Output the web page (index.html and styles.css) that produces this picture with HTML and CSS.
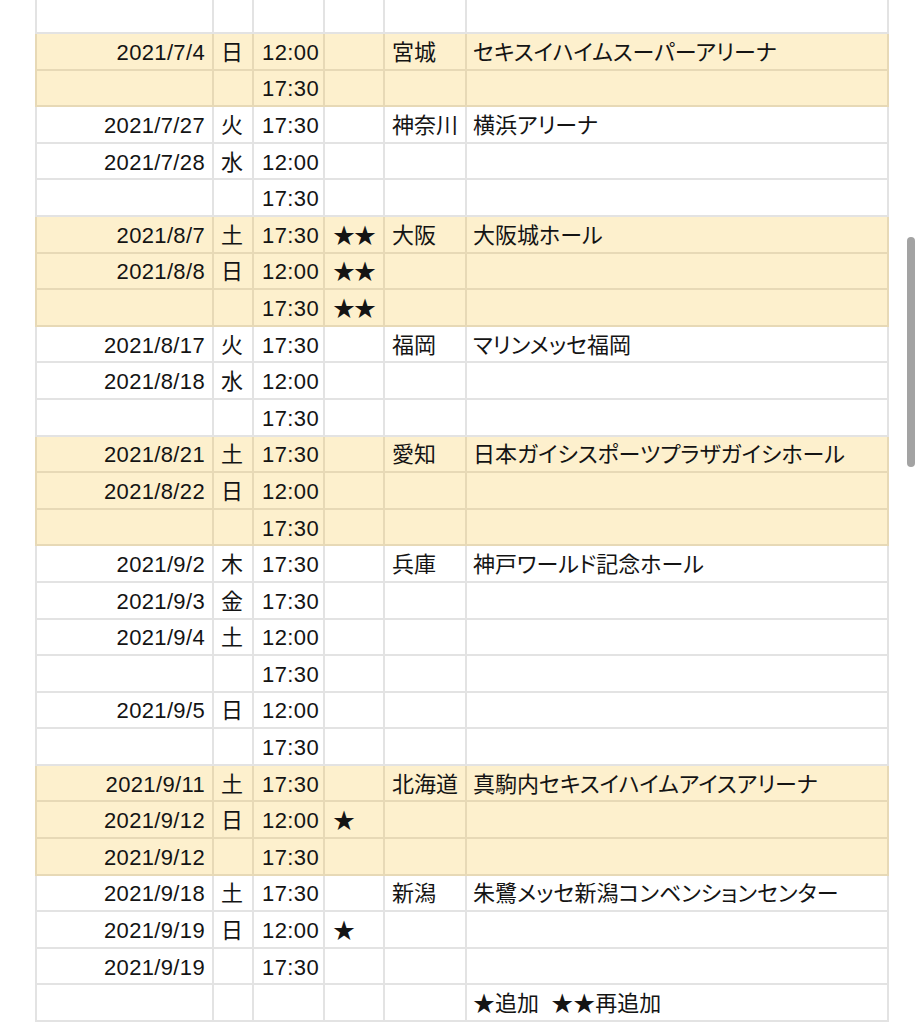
FILE: index.html
```html
<!DOCTYPE html>
<html lang="ja">
<head>
<meta charset="utf-8">
<title>日程</title>
<link rel="stylesheet" href="styles.css">
</head>
<body>
<div class="page">
<table class="sheet">
<colgroup>
<col class="c-date"><col class="c-day"><col class="c-time"><col class="c-star"><col class="c-pref"><col class="c-venue">
</colgroup>
<tbody>
<tr class="top"><td></td><td></td><td></td><td></td><td></td><td></td></tr>
<tr class="hl"><td class="date">2021/7/4</td><td>日</td><td class="time">12:00</td><td></td><td>宮城</td><td class="venue">セキスイハイムスーパーアリーナ</td></tr>
<tr class="hl"><td class="date"></td><td></td><td class="time">17:30</td><td></td><td></td><td></td></tr>
<tr><td class="date">2021/7/27</td><td>火</td><td class="time">17:30</td><td></td><td>神奈川</td><td class="venue">横浜アリーナ</td></tr>
<tr><td class="date">2021/7/28</td><td>水</td><td class="time">12:00</td><td></td><td></td><td></td></tr>
<tr><td class="date"></td><td></td><td class="time">17:30</td><td></td><td></td><td></td></tr>
<tr class="hl"><td class="date">2021/8/7</td><td>土</td><td class="time">17:30</td><td class="star">★★</td><td>大阪</td><td class="venue">大阪城ホール</td></tr>
<tr class="hl"><td class="date">2021/8/8</td><td>日</td><td class="time">12:00</td><td class="star">★★</td><td></td><td></td></tr>
<tr class="hl"><td class="date"></td><td></td><td class="time">17:30</td><td class="star">★★</td><td></td><td></td></tr>
<tr><td class="date">2021/8/17</td><td>火</td><td class="time">17:30</td><td></td><td>福岡</td><td class="venue">マリンメッセ福岡</td></tr>
<tr><td class="date">2021/8/18</td><td>水</td><td class="time">12:00</td><td></td><td></td><td></td></tr>
<tr><td class="date"></td><td></td><td class="time">17:30</td><td></td><td></td><td></td></tr>
<tr class="hl"><td class="date">2021/8/21</td><td>土</td><td class="time">17:30</td><td></td><td>愛知</td><td class="venue">日本ガイシスポーツプラザガイシホール</td></tr>
<tr class="hl"><td class="date">2021/8/22</td><td>日</td><td class="time">12:00</td><td></td><td></td><td></td></tr>
<tr class="hl"><td class="date"></td><td></td><td class="time">17:30</td><td></td><td></td><td></td></tr>
<tr><td class="date">2021/9/2</td><td>木</td><td class="time">17:30</td><td></td><td>兵庫</td><td class="venue">神戸ワールド記念ホール</td></tr>
<tr><td class="date">2021/9/3</td><td>金</td><td class="time">17:30</td><td></td><td></td><td></td></tr>
<tr><td class="date">2021/9/4</td><td>土</td><td class="time">12:00</td><td></td><td></td><td></td></tr>
<tr><td class="date"></td><td></td><td class="time">17:30</td><td></td><td></td><td></td></tr>
<tr><td class="date">2021/9/5</td><td>日</td><td class="time">12:00</td><td></td><td></td><td></td></tr>
<tr><td class="date"></td><td></td><td class="time">17:30</td><td></td><td></td><td></td></tr>
<tr class="hl"><td class="date">2021/9/11</td><td>土</td><td class="time">17:30</td><td></td><td>北海道</td><td class="venue">真駒内セキスイハイムアイスアリーナ</td></tr>
<tr class="hl"><td class="date">2021/9/12</td><td>日</td><td class="time">12:00</td><td class="star">★</td><td></td><td></td></tr>
<tr class="hl"><td class="date">2021/9/12</td><td></td><td class="time">17:30</td><td></td><td></td><td></td></tr>
<tr><td class="date">2021/9/18</td><td>土</td><td class="time">17:30</td><td></td><td>新潟</td><td class="venue">朱鷺メッセ新潟コンベンションセンター</td></tr>
<tr><td class="date">2021/9/19</td><td>日</td><td class="time">12:00</td><td class="star">★</td><td></td><td></td></tr>
<tr><td class="date">2021/9/19</td><td></td><td class="time">17:30</td><td></td><td></td><td></td></tr>
<tr><td class="date"></td><td></td><td></td><td></td><td></td><td class="venue">★追加&nbsp;&nbsp;★★再追加</td></tr>
</tbody>
</table>
<div class="scrollbar"></div>
</div>
</body>
</html>
```

FILE: styles.css
```css
html, body {
  margin: 0;
  padding: 0;
  background: #ffffff;
}

body {
  font-family: "Liberation Sans", "Noto Sans CJK JP", sans-serif;
  font-size: 22px;
  color: #141414;
}

.page {
  position: relative;
  width: 923px;
  height: 1024px;
  overflow: hidden;
  padding-left: 35px;
  box-sizing: border-box;
}

.sheet {
  border-collapse: collapse;
  table-layout: fixed;
  width: 852px;
}

.c-date { width: 177px; }
.c-day { width: 40px; }
.c-time { width: 71px; }
.c-star { width: 60px; }
.c-pref { width: 82px; }
.c-venue { width: 422px; }

.sheet td {
  height: 36.6px;
  padding: 3px 0 0 7px;
  border: 2px solid #e3e3e3;
  white-space: nowrap;
  overflow: hidden;
  line-height: 1;
  vertical-align: middle;
  box-sizing: border-box;
}

.sheet tr.top td {
  height: 33px;
  border-top: none;
}

.sheet td.date {
  text-align: right;
  padding: 3px 7px 0 0;
  letter-spacing: 0.35px;
}

.sheet td.time {
  letter-spacing: 0.4px;
  padding-left: 8px;
}

.sheet td.star {
  padding-left: 8px;
  letter-spacing: -1px;
}

.sheet td.venue {
  padding-left: 6px;
  font-feature-settings: "palt";
}

.sheet tr.hl td {
  background: #fdf0cd;
  border-color: #e7d9b6;
}

.scrollbar {
  position: absolute;
  left: 907px;
  top: 237px;
  width: 8px;
  height: 230px;
  border-radius: 4px;
  background: #a3a3a3;
}
```
